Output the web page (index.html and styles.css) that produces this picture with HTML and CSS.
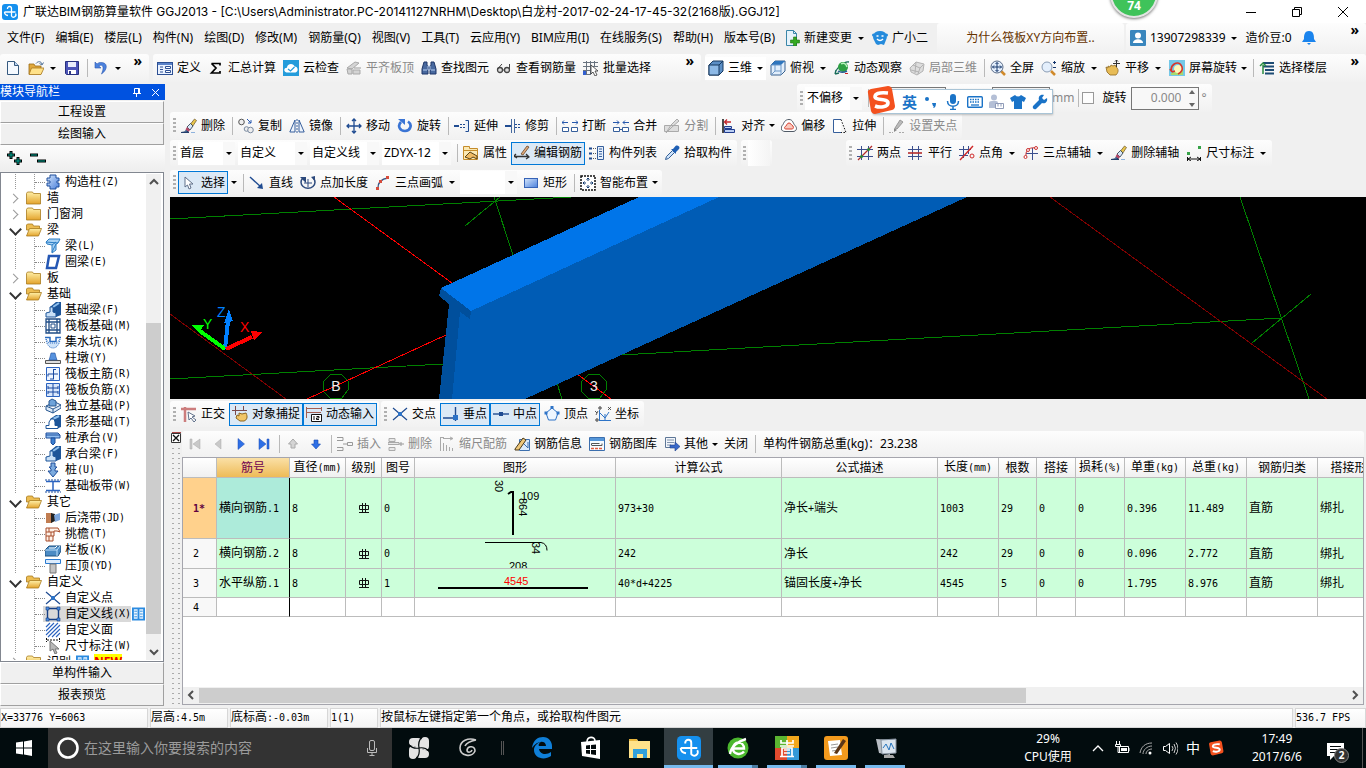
FILE: index.html
```html
<!DOCTYPE html>
<html lang="zh-CN">
<head>
<meta charset="utf-8">
<title>广联达BIM钢筋算量软件 GGJ2013</title>
<link rel="stylesheet" href="styles.css">
</head>
<body>
<svg class="defs" aria-hidden="true">
<defs>
<linearGradient id="gBlue" x1="0" y1="0" x2="1" y2="1"><stop offset="0" stop-color="#d5e6fb"/><stop offset="1" stop-color="#4a80dc"/></linearGradient>
<linearGradient id="gFold" x1="0" y1="0" x2="0" y2="1"><stop offset="0" stop-color="#fff0a8"/><stop offset="1" stop-color="#e3a32c"/></linearGradient>
<symbol id="logo" viewBox="0 0 16 16"><rect width="16" height="16" rx="3" fill="#1590ee"/><path d="M5.500 5V4.500a2 2 0 0 1 4 0V12a2 2 0 0 0 4-2.500M2.500 8h11M2.500 8q0 3 3.500 3.500" fill="none" stroke="#fff" stroke-width="1.300"/></symbol>
<symbol id="new" viewBox="0 0 16 16"><path d="M2.500 1.500h7l4 4v9h-11z" fill="#f4f9ff" stroke="#35597f"/><path d="M9.500 1.500v4h4" fill="#bcd5f3" stroke="#35597f"/></symbol>
<symbol id="open" viewBox="0 0 16 16"><path d="M1 4h5l1 2h6v8H1z" fill="#e0a83c" stroke="#9a6a14" stroke-width=".8"/><path d="M3.500 8H16l-3 6.500H1z" fill="#ffe28a" stroke="#a87920" stroke-width=".8"/><path d="M8 3.500C10 1 13 1 14 4M15.500 2.500L14 5l-2.500-1.500" fill="none" stroke="#4b6d94"/></symbol>
<symbol id="save" viewBox="0 0 16 16"><path d="M1.500 1.500h13v13h-12l-1-1z" fill="#4c54b8" stroke="#27307e"/><path d="M4 2h8v5H4z" fill="#e9edfb"/><path d="M4 10h8v4H4z" fill="#fff"/><path d="M5 11h2v3H5z" fill="#333b86"/></symbol>
<symbol id="undo" viewBox="0 0 16 16"><path d="M2 2v6h6L5.800 5.900C9 4 12 6 8.500 14c7-5 6-12-1-11.500-1.500 0-2.500.6-3.500 1.500z" fill="#4b82de" stroke="#2b57ae" stroke-width=".6"/></symbol>
<symbol id="define" viewBox="0 0 16 16"><rect x=".5" y="2.500" width="15" height="12" fill="#eaf2ff" stroke="#2c4f93"/><path d="M1 3h14v2H1z" fill="#5b83c9"/><path d="M3 7h3M3 9.500h3M3 12h3" stroke="#2c4f93"/><path d="M8.500 6.500h5v2h-5zM8.500 10.500h5v2h-5z" fill="#fff" stroke="#2c4f93"/></symbol>
<symbol id="sigma" viewBox="0 0 16 16"><path d="M3.500 3.500h8.500v2M12 11v2H3.500L8 8 3.500 3.500" fill="none" stroke="#000" stroke-width="1.700"/></symbol>
<symbol id="cloud" viewBox="0 0 16 16"><path d="M0 0h16v16H0z" fill="#249cdb"/><path d="M3.500 12.500C0 11.500 1 7.500 4 7.800 4 3 11 3 11.500 6.500c4 0 4 5.500 1 6z" fill="#fff"/><path d="M5 9l2.500 2L11.500 7" fill="none" stroke="#249cdb" stroke-width="1.300"/></symbol>
<symbol id="flat" viewBox="0 0 16 16"><path d="M1 8l8-6 4 1-7 6zM1 9h5v5H2zM7 10h7v4H7z" fill="#d4d4d4" stroke="#a9a9a9"/><path d="M8 8h7" stroke="#999"/></symbol>
<symbol id="bino" viewBox="0 0 16 16"><path d="M3 2h3v3l1 2v7H1V9zM10 2h3l2 7v5H9V7l1-2z" fill="#48699f" stroke="#1f3768"/><path d="M7 6h2v4H7zM2 10h4M10 10h4" fill="#1f3768" stroke="#b9d0f2"/></symbol>
<symbol id="glass" viewBox="0 0 16 16"><circle cx="4" cy="10" r="2.500" fill="#ddd" stroke="#444" stroke-width="1.300"/><circle cx="11" cy="10" r="2.500" fill="#ddd" stroke="#444" stroke-width="1.300"/><path d="M6.500 10h2M1.500 9L6 4M13.500 9V4" stroke="#444" fill="none"/></symbol>
<symbol id="batch" viewBox="0 0 16 16"><path d="M0 2.500h15M0 6.500h15M0 10.500h7M0 14.500h7M3.500 1v14M7.500 1v14M11.500 1v5" stroke="#69737f" fill="none"/><path d="M0 11h3v4H0z" fill="#315fd0"/><path d="M8 5l7 6h-3l2 4-2 1-2-4-2 2z" fill="#fff" stroke="#333" stroke-width=".8"/></symbol>
<symbol id="cube" viewBox="0 0 16 16"><path d="M1 5l4-4h10v10l-4 4H1z" fill="#5c8fc6" stroke="#17395f"/><path d="M1 5h10v10H1z" fill="#8db9e6" stroke="#17395f"/><path d="M11 5l4-4" stroke="#17395f"/></symbol>
<symbol id="cube2" viewBox="0 0 16 16"><path d="M1 5l4-4h10v10l-4 4H1z" fill="#e2eefb" stroke="#38618e"/><path d="M1 5l4-4h10l-4 4z" fill="#2e75bd"/><path d="M11 5v10M1 5h10M5 5v6h6M5 11l-4 4" stroke="#6c98c8" fill="none"/></symbol>
<symbol id="orbit" viewBox="0 0 16 16"><path d="M1 14C2 8 10 1 15 2M1 14l4-1M1 14l1-4" stroke="#176b58" fill="none" stroke-width="1.300"/><circle cx="9" cy="7" r="5" fill="#2ea043"/><path d="M7 4c3-2 5 0 6 3" stroke="#b9f2bf" fill="none" stroke-width="1.500"/><path d="M4 11c3 2 7 1 9 0" stroke="#245a92" stroke-width="1.500" fill="none"/><path d="M11 13.500h3" stroke="#c22"/></symbol>
<symbol id="part3" viewBox="0 0 16 16"><path d="M1 8l6-6 8 2-1 7-6 4-6-3z" fill="#ddd" stroke="#b2b2b2"/><path d="M4 5l7 3 3-3M7 2l-1 11M11 8l-2 6M2 10l8 2" fill="none" stroke="#b2b2b2"/></symbol>
<symbol id="full" viewBox="0 0 16 16"><path d="M11 11l4 4" stroke="#d08a2b" stroke-width="2.500"/><circle cx="7" cy="7" r="6" fill="#e4effc" stroke="#5a6c88"/><path d="M7 2.500v9M2.500 7h9M5.500 4L7 2.500 8.500 4M5.500 10L7 11.500 8.500 10M4 5.500L2.500 7 4 8.500M10 5.500L11.500 7 10 8.500" fill="none" stroke="#17386d"/></symbol>
<symbol id="zoomi" viewBox="0 0 16 16"><path d="M10 11l4 4" stroke="#d08a2b" stroke-width="2.500"/><circle cx="6" cy="7" r="5" fill="#e4effc" stroke="#8a9cb4"/><path d="M13.500 1v3M12 2.500h3M12 7.500h3" stroke="#17386d"/></symbol>
<symbol id="hand" viewBox="0 0 16 16"><path d="M1 7l2 1V6l2 1 1-2 2 1 2-1 2 3c2 2 1 5-1 7H5L2 12z" fill="#e8bc56" stroke="#8d6720" stroke-width=".8"/><path d="M11.500 0v7M8 3.500h7M10 1.500L11.500 0 13 1.500" stroke="#333" fill="none"/></symbol>
<symbol id="rotv" viewBox="0 0 16 16"><path d="M0 0h16v16H0z" fill="#74c8e8"/><path d="M2 13l12-4v6H2z" fill="#a8da6e"/><circle cx="9" cy="9" r="4" fill="#fff7b8"/><path d="M3 12C0 5 9 0 12 5c3 4 0 8-3 9M3 12l-2-3M3 12l3-1" fill="none" stroke="#d8362b" stroke-width="1.600"/></symbol>
<symbol id="floors" viewBox="0 0 16 16"><path d="M4 3h11M4 6.500h11M6 10h9M6 13.500h9" stroke="#1c4b74" stroke-width="1.800"/><path d="M4 14V5M1 6l3-3 3 3" stroke="#2a8c42" stroke-width="1.500" fill="none"/></symbol>
<symbol id="newchg" viewBox="0 0 16 16"><path d="M2.500.500h7l3 3v12h-10z" fill="#e6f3fb" stroke="#3a86a9"/><path d="M9.500.500v3h3" fill="none" stroke="#3a86a9"/><path d="M9.500 7h3v3h3v3h-3v3h-3v-3h-3v-3h3z" fill="#35a921" stroke="#1c7410" stroke-width=".6"/></symbol>
<symbol id="robot" viewBox="0 0 16 16"><path d="M8 1c7 0 8 6 6 9l-2 5-3-1-3 1-2-1-2-4C0 7 1 1 8 1z" fill="#258bdc"/><circle cx="1.500" cy="5" r="1.500" fill="#258bdc"/><circle cx="14.500" cy="5" r="1.500" fill="#258bdc"/><path d="M4.500 6h2M9.500 6h2M5 9c2 2 4 2 6 0" stroke="#fff" stroke-width="1.500" fill="none"/></symbol>
<symbol id="user" viewBox="0 0 16 16"><rect width="16" height="16" rx="1" fill="#3986bd"/><circle cx="8" cy="5.500" r="3" fill="#fff"/><path d="M3 13c0-5 10-5 10 0z" fill="#fff"/></symbol>
<symbol id="bell" viewBox="0 0 16 16"><path d="M8 1c5 0 5 5 5 8l2 3H1l2-3c0-3 0-8 5-8z" fill="#1b84ed"/><path d="M6 13h4l-2 2z" fill="#1b84ed"/></symbol>
<symbol id="brush" viewBox="0 0 16 16"><path d="M9.500 6l4-5 2 1.500-4 6z" fill="#e8c54c" stroke="#69552a" stroke-width=".7"/><path d="M6 9l3.500-3.500L12 8l-3 4z" fill="#d9e7f8" stroke="#234" stroke-width=".8"/><path d="M6 9l3 3-1.500 2-3-2.500z" fill="#b34666"/><path d="M0 14.500q4 0 5-2l3 2z" fill="#3e6496" stroke="#24406c"/><path d="M10 14.500h4" stroke="#8eb2dd"/></symbol>
<symbol id="copy" viewBox="0 0 16 16"><circle cx="3.500" cy="4" r="2.800" fill="#eee" stroke="#555"/><circle cx="8.500" cy="11" r="2.300" fill="#eee" stroke="#7a8aa0"/><circle cx="12.500" cy="12" r="2.800" fill="#eee" stroke="#7a8aa0"/><path d="M9 1l4 4M13 2v3h-3" stroke="#2858ae" fill="none"/></symbol>
<symbol id="mirror" viewBox="0 0 16 16"><path d="M6 2v12H.800zM10 2v12h5.200z" fill="#eef4fc" stroke="#365f9c"/><path d="M8 1v14" stroke="#365f9c" stroke-dasharray="2 1"/></symbol>
<symbol id="move" viewBox="0 0 16 16"><path d="M8 1v14M1 8h14M6 3l2-2 2 2M6 13l2 2 2-2M3 6L1 8l2 2M13 6l2 2-2 2" fill="none" stroke="#1f4b91" stroke-width="1.300"/></symbol>
<symbol id="rotate" viewBox="0 0 16 16"><path d="M4 4c-4 4-1 9 4 9s8-6 3-9.500" fill="none" stroke="#3a74d4" stroke-width="2.700"/><path d="M1 1h7v6z" fill="#3a74d4"/></symbol>
<symbol id="extend" viewBox="0 0 16 16"><path d="M0 8h5" stroke="#1f4b91" stroke-width="2"/><path d="M6 6.500h5M6 9.500h5" stroke="#1f4b91" stroke-dasharray="2 1"/><path d="M11.500 2.500h3v11h-3" fill="#e7effa" stroke="#1f4b91"/></symbol>
<symbol id="trim" viewBox="0 0 16 16"><path d="M0 8h6" stroke="#1f4b91" stroke-width="2"/><path d="M10 6.500h5M10 9.500h5" stroke="#1f4b91" stroke-dasharray="2 1"/><path d="M6.500 1v14M9.500 1v14" fill="none" stroke="#45699f"/></symbol>
<symbol id="break" viewBox="0 0 16 16"><path d="M.500 9.500h6v4h-6zM9.500 9.500h6v4h-6z" fill="#fff" stroke="#365f9c"/><path d="M0 4.500h6M2 2.500l-2 2 2 2M10 4.500h6M14 2.500l2 2-2 2" stroke="#2658ad" fill="none"/></symbol>
<symbol id="merge" viewBox="0 0 16 16"><path d="M.500 9.500h6v4h-6zM9.500 9.500h6v4h-6zM6 11.500h4" fill="#fff" stroke="#365f9c"/><path d="M0 4.500h6M4 2.500l2 2-2 2M10 4.500h6M12 2.500l-2 2 2 2" stroke="#2658ad" fill="none"/></symbol>
<symbol id="split" viewBox="0 0 16 16"><path d="M.500 7.500h14v6H.500zM2 15l5-8 6-6 2 2-7 6z" fill="#ddd" stroke="#aaa"/></symbol>
<symbol id="align" viewBox="0 0 16 16"><path d="M2 1v14" stroke="#111" stroke-width="1.500"/><path d="M4 4h6M6 1.500L3.500 4 6 6.500" stroke="#c3272d" fill="none" stroke-width="1.300"/><path d="M3.500 8.500h7v2h-7zM3.500 11.500h10v3h-10z" fill="#b9cdf2" stroke="#203c8f"/></symbol>
<symbol id="offset" viewBox="0 0 16 16"><path d="M8 1.500c4 0 4 4 6 6 3 3 1 6-2 6H4c-4 0-5-4-2-7 1-2 2-5 6-5z" fill="#fff" stroke="#4f5965"/><path d="M8 5c2 0 2 2 4 3 1 2 0 3-1 3H5c-2 0-2-2 0-3 1-1 1-3 3-3z" fill="#fac8bd" stroke="#d33e2e"/></symbol>
<symbol id="stretch" viewBox="0 0 16 16"><path d="M9 1.500H1.500v13H9" fill="#fff" stroke="#365f9c"/><path d="M9 1.500l5 13H9" fill="none" stroke="#111" stroke-dasharray="1.500 1.500"/></symbol>
<symbol id="gripi" viewBox="0 0 16 16"><path d="M6 10l5-8 3 2-6 7z" fill="#bbb" stroke="#999"/><path d="M5 10l3 2-3 2z" fill="#888"/><path d="M0 14.500h4M10 14.500h6" stroke="#aaa" stroke-dasharray="2 1"/></symbol>
<symbol id="prop" viewBox="0 0 16 16"><path d="M.500 1.500h6v2h8v11H.500z" fill="#fbe9b4" stroke="#c58c2a"/><path d="M1 5.500h13" stroke="#c58c2a"/><path d="M2 12l5-5 7 4v3l-4-2-3 2z" fill="#f0bb64" stroke="#594216"/></symbol>
<symbol id="editr" viewBox="0 0 16 16"><path d="M7 9l6-8 2 1-6 8z" fill="#e2ab7b" stroke="#674426" stroke-width=".8"/><path d="M0 11.500h14M2 9l-2 2 3 2M12 9l3 3-3 2" fill="none" stroke="#333" stroke-width="1.300"/></symbol>
<symbol id="list" viewBox="0 0 16 16"><path d="M0 3.500h3M0 8.500h3M0 13.500h3" stroke="#1f4b91" stroke-width="2"/><path d="M4 3.500h3M4 8.500h3M4 13.500h3" stroke="#555" stroke-dasharray="1 1"/><path d="M8.500 1.500h6v13h-6z" fill="#e6effb" stroke="#365f9c"/><path d="M10 4h3M10 6.500h3M10 9h3M10 11.500h3" stroke="#365f9c"/></symbol>
<symbol id="pick" viewBox="0 0 16 16"><path d="M1.500 14.500l1-3 6-6 2 2-6 6z" fill="#cde2fa" stroke="#345f96"/><path d="M7 4l2 0 2.500-3C14-.500 16.500 2 15 4l-3 3v2z" fill="#1f5fb4"/></symbol>
<symbol id="ax2" viewBox="0 0 16 16"><path d="M4.500 1v14M11.500 1v14M0 4.500h16M0 11.500h16" stroke="#3b4f8e"/><path d="M1 15L15 1" stroke="#b42b2b" stroke-width="1.300"/><circle cx="4.500" cy="11.500" r="1.500" fill="#278b36"/><circle cx="11.500" cy="4.500" r="1.500" fill="#278b36"/></symbol>
<symbol id="axp" viewBox="0 0 16 16"><path d="M4.500 1v14M10.500 1v14M0 4.500h14M0 11.500h14" stroke="#3b4f8e"/><path d="M0 8h14" stroke="#b42b2b" stroke-width="1.600"/></symbol>
<symbol id="axa" viewBox="0 0 16 16"><path d="M4.500 1v12M0 4.500h12M0 10.500h9M9.500 1v8" stroke="#3b4f8e"/><path d="M1 15L14 1" stroke="#d02929" stroke-width="1.400"/><circle cx="13" cy="11" r="2" fill="none" stroke="#d02929"/></symbol>
<symbol id="ax3" viewBox="0 0 16 16"><path d="M9.500 3v12M3 8.500h12" stroke="#3b4f8e"/><path d="M3 11C2 4 8 2 13 3" fill="none" stroke="#c33"/><circle cx="2.500" cy="12" r="1.500" fill="#fff" stroke="#c33"/><circle cx="13" cy="3" r="1.500" fill="#fff" stroke="#c33"/><circle cx="5" cy="5" r="1.500" fill="#fff" stroke="#c33"/></symbol>
<symbol id="dim" viewBox="0 0 16 16"><path d="M1 7h3v3H1zM12 1h3v3h-3z" fill="#37a348"/><path d="M1.500 12v4M14.500 12v4M2 14h12M5 12l-3 2 3 2M11 12l3 2-3 2" fill="none" stroke="#111"/></symbol>
<symbol id="cursor" viewBox="0 0 16 16"><path d="M4 2v10l2.500-2L8 14l2-1-1.500-4H12z" fill="#fff" stroke="#60708a"/></symbol>
<symbol id="line" viewBox="0 0 16 16"><path d="M1 2l11 10" stroke="#1f4b91" stroke-width="1.400"/><path d="M14 14l-6-1 5-5z" fill="#1f4b91"/></symbol>
<symbol id="ptlen" viewBox="0 0 16 16"><path d="M3 3a7 6 0 1 0 10 0" fill="none" stroke="#2c497c" stroke-width="1.500"/><path d="M0 2h6v6zM15 1l-4 1 4 4z" fill="#2c497c"/><path d="M8 4v8M4 8h8" stroke="#2c497c"/></symbol>
<symbol id="arc" viewBox="0 0 16 16"><path d="M3 13C3 7 6 4 13 3" fill="none" stroke="#38507f" stroke-width="1.300"/><path d="M1 12h3v3H1zM11 1h3v3h-3zM4 5h3v3H4z" fill="#d74b3b"/></symbol>
<symbol id="recti" viewBox="0 0 16 16"><rect x="1.500" y="3.500" width="13" height="9" fill="url(#gBlue)" stroke="#3663b7"/></symbol>
<symbol id="smart" viewBox="0 0 16 16"><rect x="1" y="1" width="14" height="14" fill="#fff" stroke="#111" stroke-width="1.500" stroke-dasharray="2 1"/><path d="M8 3v3M8 10v3M3 8h3M10 8h3M6.500 4.500L8 3l1.500 1.500M6.500 11.500L8 13l1.500-1.500M4.500 6.500L3 8l1.500 1.500M11.500 6.500L13 8l-1.500 1.500" fill="none" stroke="#123a70"/></symbol>
<symbol id="ortho" viewBox="0 0 16 16"><path d="M0 3h15M4 1v15" stroke="#cc7d7d" stroke-width="2.500"/><path d="M7 6l1 8 2-2 3 4 2-2-4-3 3-1z" fill="#fff" stroke="#60708a"/></symbol>
<symbol id="snap" viewBox="0 0 16 16"><path d="M3.500 0v9M0 4.500h15M11.500 0v5" stroke="#7b4b4b"/><path d="M5 9l2 1V7l3 1 4-1c2 4 1 7-2 8H8l-4-3z" fill="#f1c667" stroke="#8d6720"/></symbol>
<symbol id="dyn" viewBox="0 0 16 16"><path d="M.500 1v11M15.500 1v4M1 2.500h14M1 6.500h14" stroke="#a45d50"/><path d="M5.500 8.500h10v7h-10z" fill="#fff" stroke="#111"/><path d="M8 10v4M10.500 10.500h2.500v1.500h-2.500v1.500H13" fill="none" stroke="#111"/></symbol>
<symbol id="cross" viewBox="0 0 16 16"><path d="M1 2l14 12M15 2L1 14" stroke="#1f4b91" stroke-width="1.200"/><path d="M6 6h4v4H6z" fill="#2d73c7"/></symbol>
<symbol id="perp" viewBox="0 0 16 16"><path d="M0 12h15M12.500 1v14" stroke="#1f4b91" stroke-width="1.400"/><path d="M10 9h5v5h-5z" fill="#2d73c7"/></symbol>
<symbol id="mid" viewBox="0 0 16 16"><path d="M0 8h16" stroke="#1f4b91" stroke-width="1.400"/><path d="M6 6h4v4H6z" fill="#1f4b91"/></symbol>
<symbol id="vert" viewBox="0 0 16 16"><path d="M8 2l6 5-2.500 7h-7L2 7z" fill="#eef6ff" stroke="#2d73c7"/><path d="M6.500 0h3v3h-3zM12.500 5.500h3v3h-3zM.500 5.500h3v3h-3z" fill="#2d73c7"/></symbol>
<symbol id="coord" viewBox="0 0 16 16"><path d="M4.500 4v11M4 14.500h12M5 7l5 5 4-6M10 8v6" fill="none" stroke="#2d73c7"/><circle cx="5" cy="2" r="1.200" fill="none" stroke="#333"/><circle cx="2" cy="14" r="1.200" fill="none" stroke="#333"/><path d="M13 1l3 3M16 1l-3 3M0 5l2 2M3 5l-2 4" stroke="#333" stroke-width=".8"/></symbol>
<symbol id="first" viewBox="0 0 16 16"><path d="M3 3h2v10H3zM13 3v10L6 8z" fill="#c9c9c9" stroke="#aaa" stroke-width=".5"/></symbol>
<symbol id="prev" viewBox="0 0 16 16"><path d="M11 3v10L5 8z" fill="#c9c9c9" stroke="#aaa" stroke-width=".5"/></symbol>
<symbol id="next" viewBox="0 0 16 16"><path d="M5 2.500v11L11.500 8z" fill="#2f70e6" stroke="#1a4bb0" stroke-width=".5"/></symbol>
<symbol id="last" viewBox="0 0 16 16"><path d="M11 3h2v10h-2zM3 2.500v11L10 8z" fill="#2f70e6" stroke="#1a4bb0" stroke-width=".5"/></symbol>
<symbol id="up" viewBox="0 0 16 16"><path d="M8 3l4.500 5H10v4H6V8H3.500z" fill="#d4d4d4" stroke="#aaa"/></symbol>
<symbol id="down" viewBox="0 0 16 16"><path d="M8 13l4.500-5H10V4H6v4H3.500z" fill="#2f70e6" stroke="#1a4bb0" stroke-width=".6"/></symbol>
<symbol id="ins" viewBox="0 0 16 16"><path d="M0 1.500h6v3H0M0 11.500h6v3H0M10.500 6.500h5v3h-5zM6 8h4" fill="none" stroke="#999"/></symbol>
<symbol id="del" viewBox="0 0 16 16"><path d="M1 2.500h6v3H1zM1 11.500h6v3H1zM0 8.500h11v-2H0z" fill="#e8e8e8" stroke="#aaa"/><path d="M11 8h5M13 6v4" stroke="#999"/></symbol>
<symbol id="scale" viewBox="0 0 16 16"><path d="M1.500 1v14M2 1.500h3M4 2.500h9M11 1l3 1.500L11 4M4.500 7v8M7.500 9v6M10.500 11v4M13.500 12v3" fill="none" stroke="#aaa"/></symbol>
<symbol id="info" viewBox="0 0 16 16"><path d="M5.500 3.500h10v11h-10z" fill="#dcebfc" stroke="#3c6fae"/><path d="M8 6l6 6M14 6v6" stroke="#3c6fae"/><path d="M1 13l8-11 3 2-7 10H1z" fill="#efc779" stroke="#49391a"/></symbol>
<symbol id="lib" viewBox="0 0 16 16"><path d="M.500 1.500h15v13H.500z" fill="#f7fbff" stroke="#3c6fae"/><path d="M1 2h14v3H1z" fill="#5596d9"/><path d="M2.500 9.500V7.500h8M3 9.500h10v-2" stroke="#555" fill="none"/><path d="M2 12.500h12" stroke="#e45b3c" stroke-width="1.500" stroke-dasharray="3 1"/></symbol>
<symbol id="other" viewBox="0 0 16 16"><path d="M1.500 1.500h10v10h-10z" fill="#f3f6fb" stroke="#5e7797"/><path d="M3 4h7M3 6.500h7M3 9h4" stroke="#7f92ab"/><path d="M6 9h5V6l5 4.500-5 4.500v-3H6z" fill="#3868c9" stroke="#1e3f8c" stroke-width=".6"/></symbol>
<symbol id="fold" viewBox="0 0 16 16"><path d="M.500 3.500l1-1.500h5l1 1.500h7v10.500H.500z" fill="url(#gFold)" stroke="#a87b1e" stroke-width=".8"/></symbol>
<symbol id="foldo" viewBox="0 0 16 16"><path d="M.500 3l1-1h5l1 2h6v4h-13z" fill="#edbd52" stroke="#a87b1e" stroke-width=".8"/><path d="M3.500 6.500h12L12.500 14H.500z" fill="url(#gFold)" stroke="#a87b1e" stroke-width=".8"/></symbol>
<symbol id="t-col" viewBox="0 0 16 16"><path d="M5 1h6v3h3v3h-2v2h2v4h-3v2H5v-3H2V9h3V7H2V4h3z" fill="url(#gBlue)" stroke="#1e4f9c"/></symbol>
<symbol id="t-beam" viewBox="0 0 16 16"><path d="M1 4l3-3h11l-2 4-2 1v6l-4 3V7L2 6z" fill="#a8d2f5" stroke="#2a7dc4"/><path d="M1 4l12 1M7 7l4-3M7 14l4-8" stroke="#2a7dc4"/></symbol>
<symbol id="t-ring" viewBox="0 0 16 16"><path d="M4 2h10l-3 12H2z" fill="#fff" stroke="#2457b4" stroke-width="2.500"/></symbol>
<symbol id="t-fb" viewBox="0 0 16 16"><path d="M5 5l6-5h5v13l-5 2z" fill="#1d5599"/><path d="M8 5l6-4" stroke="#8fc0ee" stroke-width="2"/><path d="M1 15v-4l4-1V5h3v5l3 1v4z" fill="#c9e0f7" stroke="#1d5599"/></symbol>
<symbol id="t-strip2" viewBox="0 0 16 16"><path d="M5 5l6-4h5v12l-5 2z" fill="#1d5599"/><path d="M8 5l6-3" stroke="#8fc0ee" stroke-width="2"/><path d="M1 14.500v-3h3V8l2-3h3l1 3v3.500h3v3z" fill="#fff" stroke="#1d5599"/></symbol>
<symbol id="t-raft" viewBox="0 0 16 16"><path d="M1 1h14v14H1zM4 1v14M12 1v14M1 4h14M1 12h14" fill="#fff" stroke="#214d86" stroke-width="1.300"/><path d="M6 6h4v4H6z" fill="#fff" stroke="#214d86"/></symbol>
<symbol id="t-pit" viewBox="0 0 16 16"><path d="M1 5c1 12 13 12 14 0l-3 4H4z" fill="#cfe3f9" stroke="#2a6bc0" stroke-dasharray="1 1"/><path d="M0 3.500h5v4h6v-4h5" fill="none" stroke="#2a6bc0" stroke-width="1.500"/></symbol>
<symbol id="t-pier" viewBox="0 0 16 16"><path d="M.500 10.500h15v3H.500z" fill="#ddd" stroke="#555"/><path d="M6 3h4l1 4 1 3H4l1-3z" fill="#5792de" stroke="#1e4f9c" stroke-width=".6"/></symbol>
<symbol id="t-main" viewBox="0 0 16 16"><path d="M1.500 1.500h13v13h-13z" fill="#eef5ff" stroke="#2b63c0"/><path d="M8.500 3v10M3 10.500V8h10M8 3.500h3M5 13h4" fill="none" stroke="#1849a0"/></symbol>
<symbol id="t-neg" viewBox="0 0 16 16"><path d="M1.500 1.500h13v13h-13z" fill="#d9e7fb" stroke="#2b63c0"/><path d="M8 2v12M3 6h10M3 10h10M3 4v3M13 4v3M3 9v3M13 9v3" fill="none" stroke="#1849a0"/></symbol>
<symbol id="t-ind" viewBox="0 0 16 16"><path d="M1 8l9-4 6 3v3l-8 5-7-3zM1 8l7 3 8-4M8 11v4" fill="#dbe9f8" stroke="#27568f"/><path d="M4 3l3-2 4 2v5H4z" fill="#6ea3da" stroke="#27568f"/></symbol>
<symbol id="t-cap" viewBox="0 0 16 16"><path d="M1 3h12l2 2v3H1z" fill="#8fbdf0" stroke="#1e4f9c"/><path d="M6 8h4v5l-2 2-2-2z" fill="#3a7ed0" stroke="#1e4f9c"/><path d="M1 5h14" stroke="#1e4f9c"/></symbol>
<symbol id="t-pile" viewBox="0 0 16 16"><path d="M6 1h4v4h2l-2 2v2h3l-5 6-5-6h3V7L4 5h2z" fill="#7cabdf" stroke="#1e4f9c"/></symbol>
<symbol id="t-strip" viewBox="0 0 16 16"><path d="M0 2h16M0 14h16" stroke="#1e4f9c" stroke-dasharray="2 1"/><path d="M1 3.500h14M1 12.500h14M8 4v9" stroke="#2b63c0" stroke-width="1.500"/></symbol>
<symbol id="t-pour" viewBox="0 0 16 16"><path d="M1 3h6v10H1z" fill="#c17d51"/><path d="M6 3l4 1v7l-4 2z" fill="#222"/><path d="M9 5l6-2v7l-5 2z" fill="#7da6dc"/></symbol>
<symbol id="t-eave" viewBox="0 0 16 16"><path d="M1 2h12l2 4-3-1h-3v5H8v5H1z" fill="#fff2e8" stroke="#a84c2a"/><path d="M1 6h8M1 10h7M4 2v4M6 6v4M4 10v5" stroke="#a84c2a"/></symbol>
<symbol id="t-rail" viewBox="0 0 16 16"><path d="M0 8l4-4h12v5l-3 5H0z" fill="#4b8bc4" stroke="#1d5180"/><path d="M0 8h12v6M12 8l3-4" fill="none" stroke="#bfe0fa"/><path d="M4 6h6l2-2" stroke="#fff" fill="none"/></symbol>
<symbol id="t-top" viewBox="0 0 16 16"><path d="M.500 1.500h15v4H.500z" fill="#dcecfd" stroke="#2b7bd0"/><path d="M5 6h6v9H5z" fill="#c4c4c4" stroke="#777"/></symbol>
<symbol id="t-line" viewBox="0 0 16 16"><path d="M2.500 2.500h11v11h-11z" fill="none" stroke="#163f85" stroke-width="1.400"/><path d="M1 1h3v3H1zM12 1h3v3h-3zM1 12h3v3H1zM12 12h3v3h-3z" fill="#4b8bdf" stroke="#163f85" stroke-width=".6"/></symbol>
<symbol id="t-face" viewBox="0 0 16 16"><path d="M1 5l4-4M1 9l8-8M1 13l12-12M3 15L15 3M7 15l8-8M11 15l4-4" stroke="#2b63c0" stroke-width="1.100"/></symbol>
<symbol id="t-dim" viewBox="0 0 16 16"><path d="M1.500 0v4M14.500 0v4M2 2h12" stroke="#111" stroke-dasharray="2 1"/><path d="M5 3v10l3-2 2 5 2-1-2-4h4z" fill="#b8b8b8" stroke="#777"/></symbol>
<symbol id="book" viewBox="0 0 14 16"><path d="M0 1h14v14H0z" fill="#2b8be0"/><path d="M2 3h4v10H2zM8 3h4v10H8z" fill="#eaf5ff"/><path d="M2.500 5h3M2.500 8h3M2.500 11h3M8.500 5h3M8.500 8h3M8.500 11h3" stroke="#2b8be0"/></symbol>
<symbol id="rebar" viewBox="0 0 12 12"><path d="M1.500 3.500h9v4h-9zM4.500 1v9M7.500 1v9M1 10.500h10" fill="none" stroke="#111"/></symbol>
<symbol id="s" viewBox="0 0 30 30"><path d="M2 8Q1 5 5 4L22 1q3 0 4 3l3 17q0 3-3 4L9 29q-3 0-4-3z" fill="#f4511e"/><path d="M22 8C12 7 9 9 9 12c1 4 13 1 13 6 0 4-8 5-13 3" fill="none" stroke="#fff" stroke-width="3.600"/></symbol>
</defs>
</svg>

<div class="window">
<header class="titlebar">
  <svg class="i"><use href="#logo"/></svg>
  <h1>广联达BIM钢筋算量软件 GGJ2013 - [C:\Users\Administrator.PC-20141127NRHM\Desktop\白龙村-2017-02-24-17-45-32(2168版).GGJ12]</h1>
  <div class="winbtns">
    <button aria-label="最小化"><svg class="i"><path d="M3 8.500h10" stroke="#000"/></svg></button>
    <button aria-label="还原"><svg class="i"><path d="M3.500 5.500h7v7h-7zM5.500 5.500v-2h7v7h-2" fill="none" stroke="#000"/></svg></button>
    <button aria-label="关闭"><svg class="i"><path d="M3 3l10 10M13 3L3 13" stroke="#000"/></svg></button>
  </div>
  <div class="ball">74</div>
</header>

<nav class="menubar">
  <div class="menus">
    <button>文件(F)</button><button>编辑(E)</button><button>楼层(L)</button><button>构件(N)</button><button>绘图(D)</button><button>修改(M)</button><button>钢筋量(Q)</button><button>视图(V)</button><button>工具(T)</button><button>云应用(Y)</button><button>BIM应用(I)</button><button>在线服务(S)</button><button>帮助(H)</button><button>版本号(B)</button>
    <button class="b"><svg class="i"><use href="#newchg"/></svg>新建变更<i class="caret"></i></button>
    <button class="b"><svg class="i"><use href="#robot"/></svg>广小二</button>
  </div>
  <a class="bar tip" href="#">为什么筏板XY方向布置..</a>
  <div class="bar account">
    <button class="b"><svg class="i"><use href="#user"/></svg>13907298339<i class="caret"></i></button>
    <button class="b">造价豆:0</button>
    <button class="b" aria-label="通知"><svg class="i"><use href="#bell"/></svg></button>
    <span class="more">»</span>
  </div>
</nav>

<div class="row first">
  <div class="bar file">
    <button class="b" aria-label="新建"><svg class="i"><use href="#new"/></svg></button>
    <button class="b" aria-label="打开"><svg class="i"><use href="#open"/></svg><i class="caret"></i></button>
    <button class="b" aria-label="保存"><svg class="i"><use href="#save"/></svg></button>
    <i class="sep"></i>
    <button class="b" aria-label="撤销"><svg class="i"><use href="#undo"/></svg><i class="caret"></i></button>
    <span class="more">»</span>
  </div>
  <div class="bar calc">
    <button class="b"><svg class="i"><use href="#define"/></svg>定义</button>
    <button class="b"><svg class="i"><use href="#sigma"/></svg>汇总计算</button>
    <button class="b"><svg class="i"><use href="#cloud"/></svg>云检查</button>
    <button class="b off"><svg class="i"><use href="#flat"/></svg>平齐板顶</button>
    <button class="b"><svg class="i"><use href="#bino"/></svg>查找图元</button>
    <button class="b"><svg class="i"><use href="#glass"/></svg>查看钢筋量</button>
    <button class="b"><svg class="i"><use href="#batch"/></svg>批量选择</button>
    <span class="more">»</span>
  </div>
  <div class="bar view">
    <button class="b field"><svg class="i"><use href="#cube"/></svg>三维<i class="caret"></i></button>
    <button class="b"><svg class="i"><use href="#cube2"/></svg>俯视<i class="caret"></i></button>
    <button class="b"><svg class="i"><use href="#orbit"/></svg>动态观察</button>
    <button class="b off"><svg class="i"><use href="#part3"/></svg>局部三维</button>
    <i class="sep"></i>
    <button class="b"><svg class="i"><use href="#full"/></svg>全屏</button>
    <button class="b"><svg class="i"><use href="#zoomi"/></svg>缩放<i class="caret"></i></button>
    <button class="b"><svg class="i"><use href="#hand"/></svg>平移<i class="caret"></i></button>
    <button class="b"><svg class="i"><use href="#rotv"/></svg>屏幕旋转<i class="caret tight"></i></button>
    <i class="sep"></i>
    <button class="b"><svg class="i"><use href="#floors"/></svg>选择楼层</button>
    <span class="more">»</span>
  </div>
</div>

<div class="work">
<aside class="side">
  <div class="side-head"><span>模块导航栏</span>
    <button aria-label="固定"><svg class="i"><path d="M5.500 9V4.500h5V9M9.500 4v5M4 9.500h8M7.500 10v3" fill="none" stroke="#fff"/></svg></button>
    <button aria-label="关闭"><svg class="i"><path d="M5 5l7 7M12 5l-7 7" stroke="#fff"/></svg></button>
  </div>
  <button class="tab">工程设置</button>
  <button class="tab">绘图输入</button>
  <div class="side-tools">
    <button aria-label="展开"><svg class="i"><path d="M0 5h8M4 1v8M7 11h8M11 7v8" stroke="#000" stroke-width="3"/><path d="M1 5h6M4 2v6M8 11h6M11 8v6" stroke="#00a896"/></svg></button>
    <button aria-label="折叠"><svg class="i"><path d="M0 5h8M7 11h9" stroke="#000" stroke-width="3"/><path d="M1 5h6M8 11h7" stroke="#00a896"/></svg></button>
  </div>
  <div class="tree">
    <ul class="nodes">
      <li><ul>
        <li><svg class="i"><use href="#t-col"/></svg>构造柱<b>(Z)</b></li>
      </ul></li>
      <li><div class="g shut"><svg class="i"><use href="#fold"/></svg>墙</div></li>
      <li><div class="g shut"><svg class="i"><use href="#fold"/></svg>门窗洞</div></li>
      <li><div class="g"><svg class="i"><use href="#foldo"/></svg>梁</div><ul>
        <li><svg class="i"><use href="#t-beam"/></svg>梁<b>(L)</b></li>
        <li><svg class="i"><use href="#t-ring"/></svg>圈梁<b>(E)</b></li>
      </ul></li>
      <li><div class="g shut"><svg class="i"><use href="#fold"/></svg>板</div></li>
      <li><div class="g"><svg class="i"><use href="#foldo"/></svg>基础</div><ul>
        <li><svg class="i"><use href="#t-fb"/></svg>基础梁<b>(F)</b></li>
        <li><svg class="i"><use href="#t-raft"/></svg>筏板基础<b>(M)</b></li>
        <li><svg class="i"><use href="#t-pit"/></svg>集水坑<b>(K)</b></li>
        <li><svg class="i"><use href="#t-pier"/></svg>柱墩<b>(Y)</b></li>
        <li><svg class="i"><use href="#t-main"/></svg>筏板主筋<b>(R)</b></li>
        <li><svg class="i"><use href="#t-neg"/></svg>筏板负筋<b>(X)</b></li>
        <li><svg class="i"><use href="#t-ind"/></svg>独立基础<b>(P)</b></li>
        <li><svg class="i"><use href="#t-strip2"/></svg>条形基础<b>(T)</b></li>
        <li><svg class="i"><use href="#t-cap"/></svg>桩承台<b>(V)</b></li>
        <li><svg class="i"><use href="#t-fb"/></svg>承台梁<b>(F)</b></li>
        <li><svg class="i"><use href="#t-pile"/></svg>桩<b>(U)</b></li>
        <li><svg class="i"><use href="#t-strip"/></svg>基础板带<b>(W)</b></li>
      </ul></li>
      <li><div class="g"><svg class="i"><use href="#foldo"/></svg>其它</div><ul>
        <li><svg class="i"><use href="#t-pour"/></svg>后浇带<b>(JD)</b></li>
        <li><svg class="i"><use href="#t-eave"/></svg>挑檐<b>(T)</b></li>
        <li><svg class="i"><use href="#t-rail"/></svg>栏板<b>(K)</b></li>
        <li><svg class="i"><use href="#t-top"/></svg>压顶<b>(YD)</b></li>
      </ul></li>
      <li><div class="g"><svg class="i"><use href="#foldo"/></svg>自定义</div><ul>
        <li><svg class="i"><use href="#cross"/></svg>自定义点</li>
        <li class="sel"><svg class="i"><use href="#t-line"/></svg>自定义线<b>(X)</b><svg class="i book"><use href="#book"/></svg></li>
        <li><svg class="i"><use href="#t-face"/></svg>自定义面</li>
        <li><svg class="i"><use href="#t-dim"/></svg>尺寸标注<b>(W)</b></li>
      </ul></li>
      <li><div class="g shut"><svg class="i"><use href="#fold"/></svg>识别 <svg class="i book"><use href="#book"/></svg><em>NEW</em></div></li>
    </ul>
    <div class="vscroll"><svg class="i"><path d="M4 10l4-4 4 4" fill="none" stroke="#505050" stroke-width="2"/></svg><div class="track"><div class="thumb"></div></div><svg class="i"><path d="M4 6l4 4 4-4" fill="none" stroke="#505050" stroke-width="2"/></svg></div>
  </div>
  <button class="tab">单构件输入</button>
  <button class="tab">报表预览</button>
</aside>

<main class="main">
  <div class="row r2">
    <div class="bar off-bar">
      <i class="grip"></i>
      <label class="combo w57"><select aria-label="偏移方式"><option>不偏移</option></select></label>
      <i class="sep"></i>
      <span class="coord"><input aria-label="X" disabled><input aria-label="Y" disabled></span>
      <span class="mm">mm</span>
      <i class="sep"></i>
      <label class="chk"><input type="checkbox">旋转</label>
      <span class="spin"><input aria-label="旋转角度" value="0.000"><svg class="ud"><path d="M1 6l3-4 3 4zM1 15l3 4 3-4z" fill="#666"/></svg></span><span class="deg">°</span>
    </div>
    <div class="ime">
      <svg class="slogo"><use href="#s"/></svg>
      <strong>英</strong>
      <svg class="i"><circle cx="4" cy="5" r="2" fill="#1a73c7"/><path d="M9 9h4c0 3-1 5-3 5 1-1 1-2 0-2z" fill="#1a73c7"/></svg>
      <svg class="i"><rect x="5" y="0" width="6" height="10" rx="3" fill="#1a73c7"/><path d="M2.500 7c0 7 11 7 11 0M8 12v3M5 15.500h6" fill="none" stroke="#1a73c7" stroke-width="1.500"/></svg>
      <svg class="i"><rect x=".7" y="2.700" width="14.600" height="10.600" rx="1" fill="none" stroke="#1a73c7" stroke-width="1.400"/><path d="M3 5.500h10M3 8h10" stroke="#1a73c7" stroke-width="1.500" stroke-dasharray="1.500 1"/><path d="M4 11h8" stroke="#1a73c7" stroke-width="1.300"/></svg>
      <svg class="i"><circle cx="6" cy="3.500" r="3" fill="#b4bfd6"/><path d="M1 14V9q0-2 3-2h4q2 0 2 2v5z" fill="#b4bfd6"/><path d="M7.500 9.500h8v5h-8zM10 9.500v3M13 9.500v3" fill="#fff" stroke="#8f9bb8"/></svg>
      <svg class="i"><path d="M5 1q3 3 6 0l5 3-2 4-2-1v8H4V7L2 8 0 4z" fill="#1a73c7"/></svg>
      <svg class="i"><path d="M15 4l-3 2-2-2 2-3c-4-1-6 2-5 5l-6 6c-1 2 1 4 3 3l6-6c3 1 6-1 5-5z" fill="#1a73c7"/></svg>
    </div>
  </div>

  <div class="row r3">
    <div class="bar">
      <i class="grip"></i>
      <button class="b"><svg class="i"><use href="#brush"/></svg>删除</button>
      <i class="sep"></i>
      <button class="b"><svg class="i"><use href="#copy"/></svg>复制</button>
      <button class="b"><svg class="i"><use href="#mirror"/></svg>镜像</button>
      <i class="sep"></i>
      <button class="b"><svg class="i"><use href="#move"/></svg>移动</button>
      <button class="b"><svg class="i"><use href="#rotate"/></svg>旋转</button>
      <i class="sep"></i>
      <button class="b"><svg class="i"><use href="#extend"/></svg>延伸</button>
      <button class="b"><svg class="i"><use href="#trim"/></svg>修剪</button>
      <i class="sep"></i>
      <button class="b"><svg class="i"><use href="#break"/></svg>打断</button>
      <button class="b"><svg class="i"><use href="#merge"/></svg>合并</button>
      <button class="b off"><svg class="i"><use href="#split"/></svg>分割</button>
      <i class="sep"></i>
      <button class="b"><svg class="i"><use href="#align"/></svg>对齐<i class="caret tight"></i></button>
      <button class="b"><svg class="i"><use href="#offset"/></svg>偏移</button>
      <button class="b"><svg class="i"><use href="#stretch"/></svg>拉伸</button>
      <i class="sep"></i>
      <button class="b off"><svg class="i"><use href="#gripi"/></svg>设置夹点</button>
    </div>
  </div>

  <div class="row r4">
    <div class="bar">
      <i class="grip"></i>
      <label class="combo w57"><select aria-label="楼层"><option>首层</option></select></label>
      <label class="combo w69"><select aria-label="构件类别"><option>自定义</option></select></label>
      <label class="combo w69"><select aria-label="构件类型"><option>自定义线</option></select></label>
      <label class="combo w69"><select aria-label="构件"><option>ZDYX-12</option></select></label>
      <i class="sep"></i>
      <button class="b"><svg class="i"><use href="#prop"/></svg>属性</button>
      <button class="b on"><svg class="i"><use href="#editr"/></svg>编辑钢筋</button>
      <button class="b"><svg class="i"><use href="#list"/></svg>构件列表</button>
      <button class="b"><svg class="i"><use href="#pick"/></svg>拾取构件</button>
    </div>
    <div class="bar stub"><i class="grip"></i><span></span></div>
    <div class="bar axis">
      <i class="grip"></i>
      <button class="b"><svg class="i"><use href="#ax2"/></svg>两点</button>
      <button class="b"><svg class="i"><use href="#axp"/></svg>平行</button>
      <button class="b"><svg class="i"><use href="#axa"/></svg>点角<i class="caret"></i></button>
      <button class="b"><svg class="i"><use href="#ax3"/></svg>三点辅轴<i class="caret"></i></button>
      <button class="b"><svg class="i"><use href="#brush"/></svg>删除辅轴</button>
      <button class="b"><svg class="i"><use href="#dim"/></svg>尺寸标注<i class="caret"></i></button>
    </div>
  </div>

  <div class="row r5">
    <div class="bar">
      <i class="grip"></i>
      <button class="b on"><svg class="i"><use href="#cursor"/></svg>选择</button>
      <button class="b drop" aria-label="选择方式"><i class="caret"></i></button>
      <i class="sep"></i>
      <button class="b"><svg class="i"><use href="#line"/></svg>直线</button>
      <button class="b"><svg class="i"><use href="#ptlen"/></svg>点加长度</button>
      <button class="b"><svg class="i"><use href="#arc"/></svg>三点画弧<i class="caret"></i></button>
      <label class="combo w57"><select aria-label="画弧方式"><option></option></select></label>
      <button class="b"><svg class="i"><use href="#recti"/></svg>矩形</button>
      <i class="sep"></i>
      <button class="b"><svg class="i"><use href="#smart"/></svg>智能布置<i class="caret tight"></i></button>
    </div>
  </div>

  <svg class="scene" role="img" aria-label="三维视图">
    <g fill="none" stroke="#008000">
      <path d="M0 22L401 0M324 0l19 58M295 29L330 0M0 182l273-15M450 158l662-37M387 186l5 16M1070 0l69 202M1082 146l59-49"/>
      <path d="M161 177h10l7 7v9l-6 8h-12l-7-7v-9zM419 177h10l7 7v9l-6 8h-12l-7-7v-9z"/>
    </g>
    <g fill="none" stroke="#800000"><path d="M0 117l116 85M880 0l277 202"/></g>
    <g fill="none" stroke="#f00"><path d="M164 0l118 86M137 202l139-64M407 177l34 25"/></g>
    <path d="M469 0h81L301 114 271 91z" fill="#0075e9"/>
    <path d="M549 0h248L355 202h-73l8-87 10 7 1-8z" fill="#005cb5"/>
    <path d="M271 91l30 23-1 8-10-7-8 87h-13l10-95-10-8z" fill="#004f9c"/>
    <path d="M55 152l3-28" stroke="#0080ff" stroke-width="4"/><path d="M59 112l4 12-9 2z" fill="#0080ff"/>
    <path d="M55 152L30 134" stroke="#0f0" stroke-width="4"/><path d="M22 128l12 0-5 8z" fill="#0f0"/>
    <path d="M56 152l26-12" stroke="#f00" stroke-width="4"/><path d="M92 135l-11-1 3 9z" fill="#f00"/>
    <g font-size="14"><text x="47" y="120" fill="#0080ff">Z</text><text x="33" y="132" fill="#0f0">Y</text><text x="70" y="135" fill="#f00">X</text></g>
    <g font-size="14" fill="#eee" text-anchor="middle"><text x="166" y="194">B</text><text x="424" y="194">3</text></g>
  </svg>

  <div class="row r6">
    <div class="bar">
      <i class="grip"></i>
      <button class="b"><svg class="i"><use href="#ortho"/></svg>正交</button>
      <div class="join">
        <button class="b on"><svg class="i"><use href="#snap"/></svg>对象捕捉</button>
        <button class="b on"><svg class="i"><use href="#dyn"/></svg>动态输入</button>
      </div>
    </div>
    <div class="bar">
      <i class="grip"></i>
      <button class="b"><svg class="i"><use href="#cross"/></svg>交点</button>
      <div class="join">
        <button class="b on"><svg class="i"><use href="#perp"/></svg>垂点</button>
        <button class="b on"><svg class="i"><use href="#mid"/></svg>中点</button>
      </div>
      <button class="b"><svg class="i"><use href="#vert"/></svg>顶点</button>
      <button class="b"><svg class="i"><use href="#coord"/></svg>坐标</button>
    </div>
  </div>

  <section class="detail">
    <div class="dgrip"><button aria-label="关闭面板"><svg class="i"><path d="M1.500 2.500h9v9h-9z" fill="#fff" stroke="#333"/><path d="M2 1.500h9" stroke="#a44"/><path d="M3 4l6 6M9 4l-6 6" stroke="#111" stroke-width="1.400"/></svg></button></div>
    <div class="dbody">
      <div class="bar dtools">
        <button class="b" aria-label="首条"><svg class="i"><use href="#first"/></svg></button>
        <button class="b" aria-label="上一条"><svg class="i"><use href="#prev"/></svg></button>
        <button class="b" aria-label="下一条"><svg class="i"><use href="#next"/></svg></button>
        <button class="b" aria-label="末条"><svg class="i"><use href="#last"/></svg></button>
        <i class="sep"></i>
        <button class="b" aria-label="上移"><svg class="i"><use href="#up"/></svg></button>
        <button class="b" aria-label="下移"><svg class="i"><use href="#down"/></svg></button>
        <i class="sep"></i>
        <button class="b off"><svg class="i"><use href="#ins"/></svg>插入</button>
        <button class="b off"><svg class="i"><use href="#del"/></svg>删除</button>
        <button class="b off"><svg class="i"><use href="#scale"/></svg>缩尺配筋</button>
        <button class="b"><svg class="i"><use href="#info"/></svg>钢筋信息</button>
        <button class="b"><svg class="i"><use href="#lib"/></svg>钢筋图库</button>
        <button class="b"><svg class="i"><use href="#other"/></svg>其他<i class="caret tight"></i></button>
        <button class="b">关闭</button>
        <i class="sep"></i>
        <span class="sum">单构件钢筋总重(kg)：23.238</span>
      </div>
      <div class="gridwrap">
      <table>
        <colgroup><col class="c34"><col class="c73"><col class="c56"><col class="c36"><col class="c33"><col class="c201"><col class="c166"><col class="c156"><col class="c61"><col class="c38"><col class="c39"><col class="c49"><col class="c61"><col class="c61"><col class="c71"><col class="c74"></colgroup>
        <thead><tr><th></th><th class="cur">筋号</th><th>直径<b>(mm)</b></th><th>级别</th><th>图号</th><th>图形</th><th>计算公式</th><th>公式描述</th><th>长度<b>(mm)</b></th><th>根数</th><th>搭接</th><th>损耗<b>(%)</b></th><th>单重<b>(kg)</b></th><th>总重<b>(kg)</b></th><th>钢筋归类</th><th>搭接形式</th></tr></thead>
        <tbody>
        <tr class="h61"><th class="cur"><b>1*</b></th><td class="name cell">横向钢筋<b>.1</b></td><td><b>8</b></td><td class="lv"><svg><use href="#rebar"/></svg></td><td><b>0</b></td>
          <td class="fig"><svg height="60"><path d="M93 16l3-2h2v43" fill="none" stroke="#000" stroke-width="2"/><g font-size="11"><text transform="translate(80 2) rotate(90)">30</text><text x="106" y="22">109</text><text transform="translate(104 20) rotate(90)">864</text></g></svg></td>
          <td><b>973+30</b></td><td>净长<b>+</b>端头</td><td><b>1003</b></td><td><b>29</b></td><td><b>0</b></td><td><b>0</b></td><td><b>0.396</b></td><td><b>11.489</b></td><td>直筋</td><td>绑扎</td></tr>
        <tr class="h30"><th><b>2</b></th><td class="name">横向钢筋<b>.2</b></td><td><b>8</b></td><td class="lv"><svg><use href="#rebar"/></svg></td><td><b>0</b></td>
          <td class="fig"><svg height="29"><path d="M70 3.500h56q6 1 6 8" fill="none" stroke="#000"/><g font-size="11"><text transform="translate(117 3) rotate(90)">34</text><text x="94" y="31">208</text></g></svg></td>
          <td><b>242</b></td><td>净长</td><td><b>242</b></td><td><b>29</b></td><td><b>0</b></td><td><b>0</b></td><td><b>0.096</b></td><td><b>2.772</b></td><td>直筋</td><td>绑扎</td></tr>
        <tr class="h29"><th><b>3</b></th><td class="name">水平纵筋<b>.1</b></td><td><b>8</b></td><td class="lv"><svg><use href="#rebar"/></svg></td><td><b>1</b></td>
          <td class="fig"><svg height="28"><path d="M23 19h150" stroke="#000" stroke-width="2"/><text x="89" y="16" font-size="11" fill="#f00">4545</text></svg></td>
          <td><b>40*d+4225</b></td><td>锚固长度<b>+</b>净长</td><td><b>4545</b></td><td><b>5</b></td><td><b>0</b></td><td><b>0</b></td><td><b>1.795</b></td><td><b>8.976</b></td><td>直筋</td><td>绑扎</td></tr>
        <tr class="h19 blank"><th><b>4</b></th><td class="name"></td><td></td><td></td><td></td><td></td><td></td><td></td><td></td><td></td><td></td><td></td><td></td><td></td><td></td><td></td></tr>
        </tbody>
      </table>
      </div>
      <div class="hscroll"><svg class="i"><path d="M10 4L6 8l4 4" fill="none" stroke="#505050" stroke-width="2"/></svg><div class="track"><div class="thumb"></div></div><svg class="i"><path d="M6 4l4 4-4 4" fill="none" stroke="#505050" stroke-width="2"/></svg></div>
    </div>
  </section>
</main>
</div>

<footer class="status">
  <span class="s147"><b>X=33776 Y=6063</b></span><span class="s77">层高<b>:4.5m</b></span><span class="s97">底标高<b>:-0.03m</b></span><span class="s47"><b>1(1)</b></span><span class="grow">按鼠标左键指定第一个角点，或拾取构件图元</span><span class="s71"><b>536.7 FPS</b></span>
</footer>
</div>

<div class="taskbar">
  <button class="start" aria-label="开始"><svg class="i"><path d="M0 2.500l7-1v6H0zM8 1.400L16 0v7.500H8zM0 8.500h7v6l-7-1zM8 8.500h8V16l-8-1.400z" fill="#fff"/></svg></button>
  <label class="search"><svg class="i24"><circle cx="12" cy="12" r="9.500" fill="none" stroke="#fff" stroke-width="2.600"/></svg><input aria-label="搜索" placeholder="在这里输入你要搜索的内容"><svg class="i"><rect x="5.500" y=".500" width="5" height="10" rx="1.500" fill="none" stroke="#bbb"/><path d="M3.500 8v4.500h9V8M8 13v3M5.500 15.500h5" fill="none" stroke="#bbb"/></svg></label>
  <button class="app" aria-label="风车"><svg class="i24"><g fill="#e4e4e4"><rect x="2" y="2" width="13" height="8" rx="4"/><rect x="14" y="1" width="8" height="13" rx="4"/><rect x="9" y="14" width="13" height="8" rx="4"/><rect x="2" y="10" width="8" height="13" rx="4"/><circle cx="12" cy="12" r="4"/></g><path d="M12 12c-5 1-8-1-10-3M12 12c-1-5 0-8 3-11M12 12c5-1 8 1 10 3M12 12c1 5 0 8-3 11" fill="none" stroke="#02090b" stroke-width="1.200"/></svg></button>
  <button class="app" aria-label="G"><svg class="i24"><path d="M20 4c-8-3-16 1-16 8 0 8 12 10 15 3 0-5-7-6-8-1 0 3 4 3 5 0M20 4c-5 1-9 2-11 6" fill="none" stroke="#ccc" stroke-width="1.600"/></svg></button>
  <i class="tsep"></i>
  <button class="app" aria-label="Edge"><svg class="i24"><path d="M2 12C3 4 8 1 13 1c6 0 9 5 9 9v3H9c1 6 8 6 12 3v4c-7 5-17 2-17-6 0-4 3-7 7-8-2 1-3 3-2 4h7c0-6-9-6-14 2z" fill="#0f7fd8"/></svg></button>
  <button class="app" aria-label="商店"><svg class="i24"><path d="M2 6l19-2v19L3 20z" fill="#fff"/><path d="M8 6c0-6 8-6 8-1" fill="none" stroke="#fff" stroke-width="1.600"/><path d="M7 9.500l4-.500v4H7zM12 9l5-.500V13h-5zM7 14h4v4l-4-.500zM12 14h5v5l-5-.700z" fill="#02090b"/></svg></button>
  <button class="app" aria-label="资源管理器"><svg class="i24"><path d="M1 3h8l1 2h12v17H1z" fill="#ffe28a"/><path d="M1 3h8v2H1z" fill="#e8b53c"/><path d="M5 13h14v9h-4v-4H9v4H5z" fill="#2f9fdd"/></svg></button>
  <button class="app active" aria-label="GGJ"><svg class="i24" viewBox="0 0 16 16"><use href="#logo"/></svg></button>
  <button class="app run stack" aria-label="浏览器"><svg class="i24"><circle cx="12" cy="12" r="10.500" fill="#4bb82e"/><path d="M7 12.500h11c0-8-11-8-11 0 0 6 8 7 11 3M20 3C13 5 5 10 4 18" fill="none" stroke="#fff" stroke-width="2.400"/></svg></button>
  <button class="app run stack" aria-label="土建"><svg class="i24"><path d="M0 0h12v12H0z" fill="#5bb531"/><path d="M12 0h12v12H12z" fill="#f2a81d"/><path d="M0 12h12v12H0z" fill="#e34b2e"/><path d="M12 12h12v12H12z" fill="#3399d8"/><path d="M6 4v3h12V4M12 4v5M5 10h14M7 20v-8h10v8M5 20.500h14M9 14h6M9 17h6" fill="none" stroke="#fff" stroke-width="1.700"/></svg></button>
  <button class="app run" aria-label="记事"><svg class="i24"><rect width="24" height="24" rx="3" fill="#f39a1d"/><path d="M4 5l12-1 2 15-12 1z" fill="#fff"/><path d="M7 9l7-1M7 12l7-1M8 15l6-1" stroke="#999"/><path d="M10 17l9-14 3 2-9 13z" fill="#5c3516"/></svg></button>
  <button class="app run" aria-label="监视器"><svg class="i24"><path d="M3 3l14 1v15l-11-2z" fill="#b9bec4"/><path d="M8 4l15-1v14l-14 1z" fill="#dce5ef" stroke="#86919e"/><path d="M10 12l3-4 3 6 2-7 3 6" fill="none" stroke="#2674bd"/><path d="M11 19h9l2 3H11z" fill="#aaa"/></svg></button>
  <div class="tray">
    <div class="cpu">29%<br>CPU使用</div>
    <svg class="i"><path d="M3 11l5-5 5 5" fill="none" stroke="#fff" stroke-width="1.300"/></svg>
    <svg class="i"><path d="M5.500 6.500h9v6h-9zM15 8v3M2.500 1v3M5.500 1v3M1.500 4.500h5v2h-5zM4 7v5.500h2" fill="none" stroke="#fff"/><path d="M7 8h6v3H7z" fill="#fff"/></svg>
    <svg class="i"><path d="M2 13C3 7 7 3 14 3M5 14c0-4 4-8 9-8M8 14c0-3 3-5 6-5" fill="none" stroke="#aaa"/><circle cx="12" cy="13" r="1.500" fill="#fff"/></svg>
    <svg class="i"><path d="M1.500 6.500h2l4-3v10l-4-3h-2z" fill="none" stroke="#fff"/><path d="M10 6q2 2 0 5M12 4q3 4 0 9M14 2.500q4 6 0 12" fill="none" stroke="#ccc"/></svg>
    <span class="zh">中</span>
    <svg class="i"><use href="#s"/></svg>
    <time>17:49<br>2017/6/6</time>
    <button class="note" aria-label="通知中心"><svg class="i24"><path d="M1 3h17v13H8l-4 4v-4H1z" fill="#fff"/><path d="M4 6.500h11M4 9.500h11M4 12.500h8" stroke="#02090b"/></svg><span>2</span></button>
  </div>
</div>
</body>
</html>
```
FILE: styles.css
```css
* { box-sizing: border-box; }
body {
  margin: 0;
  height: 100vh;
  display: flex;
  flex-direction: column;
  overflow: hidden;
  background: #f0f0f0;
  color: #000;
  font: 12px/16px "Noto Sans", "Noto Sans CJK SC", sans-serif;
}
button, input, select { font: inherit; color: inherit; margin: 0; }
button { border: 0; padding: 0; background: none; white-space: nowrap; }
ul { list-style: none; margin: 0; padding: 0; }
i, em { font-style: normal; }
.defs { position: absolute; width: 0; height: 0; }
.i { width: 16px; height: 16px; flex: none; display: block; }
.i24 { width: 24px; height: 24px; flex: none; display: block; }
.window { flex: 1; display: flex; flex-direction: column; min-height: 0; }

/* single-width Latin text beside full-width Chinese text */
.tree b, .gridwrap b, .status b { font: 10px/16px "DejaVu Sans Mono", monospace; }

/* title bar */
.titlebar { position: relative; display: flex; align-items: center; height: 23px; padding-left: 2px; gap: 5px; background: #fff; }
.titlebar h1 { flex: 1; margin: 0; font: 12px/16px Inter, "Noto Sans CJK SC", sans-serif; white-space: nowrap; }
.winbtns { display: flex; }
.winbtns button { width: 46px; height: 23px; display: grid; place-items: center; }
.ball {
  position: absolute; right: 208px; top: -30px;
  width: 48px; height: 48px; padding-top: 26px;
  border-radius: 50%; border: 2px solid #e4e4e4;
  background: #3fc35a; box-shadow: 0 1px 3px #777;
  color: #fff; font-weight: bold; text-align: center;
}

/* bars */
.row { display: flex; align-items: stretch; }
.bar { position: relative; display: flex; align-items: center; gap: 1px; border-radius: 3px; background: linear-gradient(#fdfdfd, #f1f1f1); }
.b { display: flex; align-items: center; gap: 4px; height: 23px; padding: 0 2px; border: 1px solid transparent; }
.b.on { background: #dbe9f6; border-color: #0078d7; }
.b.off { color: #8a8a8a; }
.b.field { background: #fff; width: 61px; }
.join { display: flex; }
.sep { width: 1px; height: 18px; margin: 0 1px 0 3px; background: #b9b9b9; }
.grip { width: 3px; height: 15px; margin: 0 1px 0 3px; background: repeating-linear-gradient(#b0b0b0 0 2px, transparent 2px 4px); }
.caret { width: 9px; display: grid; place-items: center; }
.caret.tight { width: 5px; }
.caret::before { content: ""; border: 3px solid transparent; border-top-color: #000; border-bottom: 0; }
.more { position: absolute; right: 7px; top: 0; font-size: 14px; font-weight: bold; line-height: 14px; }

.menubar { display: flex; height: 30px; margin-bottom: 1px; }
.menus { display: flex; align-items: center; gap: 1px; padding-left: 2px; width: 937px; }
.menus button:not(.b) { padding: 0 5px; }
.tip { width: 187px; justify-content: center; margin-right: 2px; color: #630; text-decoration: none; }
.account { flex: 1; padding-left: 1px; }
.account .b:nth-child(3) { margin-left: 2px; }

.first { height: 28px; gap: 4px; margin-bottom: 2px; }
.file { width: 149px; padding-left: 2px; }
.calc { width: 548px; padding-left: 1px; }
.view { flex: 1; }

.work { flex: 1; display: flex; min-height: 0; }

/* navigation */
.side { width: 166px; flex: none; display: flex; flex-direction: column; padding-right: 1px; }
.side-head { display: flex; height: 16px; margin-bottom: 1px; background: #0052e0; color: #fff; align-items: center; }
.side-head span { flex: 1; }
.side-head button { margin-right: 2px; }
.tab { height: 22px; border: 1px solid #a0a0a0; border-left-color: #fff; border-top-color: #fff; background: #f0f0f0; margin-right: 1px; }
.side-tools { display: flex; gap: 7px; align-items: center; height: 26px; margin-bottom: 1px; padding-left: 7px; background: linear-gradient(#fdfdfd, #eee); }
.tree { flex: 1; min-height: 0; display: flex; border: 1px solid #828790; background: #fff; margin-right: 1px; padding: 1px; }
.nodes { flex: 1; min-width: 0; overflow: hidden; white-space: nowrap; }
.nodes li li, .g { position: relative; display: flex; align-items: center; height: 16px; line-height: 16px; }
.nodes li li { padding-left: 43px; gap: 4px; }
.nodes ul {
  background:
    repeating-linear-gradient(#999 0 1px, transparent 1px 2px) 13px 0 / 1px 100% no-repeat,
    repeating-linear-gradient(#999 0 1px, transparent 1px 2px) 32px 0 / 1px 100% no-repeat;
}
.nodes li li::before { content: ""; width: 10px; margin: 0 0 0 -10px; border-top: 1px dotted #888; position: absolute; left: 43px; }
.g { padding-left: 24px; gap: 5px; }
.g::before { content: ""; position: absolute; left: 9px; top: 3px; width: 7px; height: 7px; border: solid #333; border-width: 0 2px 2px 0; transform: rotate(45deg); }
.g.shut::before { left: 8px; top: 5px; width: 6px; height: 6px; border-color: #999; border-width: 0 1px 1px 0; transform: rotate(-45deg); }
.nodes .sel { background: linear-gradient(#d9d9d9, #d9d9d9) 41px 0 / 88px 100% no-repeat; }
.tree .book { width: 13px; }
.tree li b { margin-left: -4px; }
.tree .sel { gap: 4px; }
.tree .sel .book { margin-left: -3px; }
.tree em { color: #e00; background: #ff0; font-weight: bold; }
.vscroll { width: 15px; margin-right: 1px; background: #f0f0f0; display: flex; flex-direction: column; }
.vscroll .i { width: 15px; }
.vscroll .track { flex: 1; display: flex; flex-direction: column; justify-content: flex-end; padding-bottom: 10px; }
.vscroll .thumb { height: 70%; background: #cdcdcd; }

/* drawing toolbars */
.main { flex: 1; min-width: 0; display: flex; flex-direction: column; padding-left: 4px; }
.r2 { position: relative; height: 28px; padding-left: 627px; }
.r3 { height: 27px; margin-bottom: 1px; }
.r4 { height: 26px; gap: 4px; margin-bottom: 4px; }
.r5 { height: 25px; margin-bottom: 2px; }
.r6 { height: 26px; gap: 2px; margin: 2px 0 4px; }
.row .bar:has(.grip) { padding-right: 2px; }
.combo { position: relative; display: block; height: 23px; margin-right: 2px; background: #fff; }
.combo select { width: 100%; height: 100%; border: 0; padding: 0 2px; appearance: none; background: linear-gradient(#f8f8f8, #f8f8f8) right / 12px 100% no-repeat; }
.combo::after { content: ""; position: absolute; right: 3px; top: 10px; border: 3px solid transparent; border-top-color: #000; border-bottom: 0; pointer-events: none; }
.w57 { width: 57px; }
.w69 { width: 69px; }
.off-bar { color: #888; }
.off-bar select { color: #000; }
.coord { display: flex; gap: 46px; padding-left: 17px; }
.coord input { width: 58px; height: 22px; border: 1px solid #777; background: #f8f8f8; }
.mm { padding: 0 0 0 1px; }
.chk { display: flex; align-items: center; gap: 8px; color: #000; }
.chk input { appearance: none; width: 12px; height: 12px; border: 1px solid #999; background: #fdfdfd; margin-left: 1px; }
.spin { display: flex; align-items: center; width: 68px; height: 23px; margin-left: 4px; border: 1px solid #777; background: #f8f8f8; }
.spin input { flex: 1; min-width: 0; border: 0; padding: 0 3px; background: none; text-align: right; }
.ud { width: 14px; height: 21px; flex: none; padding-left: 4px; }
.deg { padding: 0 3px 0 1px; }
.ime { position: absolute; left: 703px; top: 5px; height: 25px; width: 180px; display: flex; align-items: center; justify-content: space-between; padding: 0 4px 0 28px; background: #fff; border: 1px solid #a9c4d6; box-shadow: 0 1px 2px #bbb; z-index: 2; }
.slogo { position: absolute; left: -8px; top: -5px; width: 30px; height: 30px; }
.ime strong { color: #1a73c7; font-size: 15px; }
.stub span { width: 22px; height: 26px; background: linear-gradient(90deg, #fff, #f4f4f4); }
.stub { gap: 0; }
.stub .grip { margin: 0 2px; }
.axis { margin-left: 70px; }
.drop { width: 10px; padding: 0; justify-content: center; }

.scene { display: block; flex: none; width: 100%; height: 202px; background: #000; font-family: "Liberation Sans", sans-serif; shape-rendering: crispEdges; }

/* rebar table */
.detail { flex: 1; min-height: 0; display: flex; }
.dgrip { width: 12px; flex: none; background: radial-gradient(circle, #aaa 1px, transparent 1px) 0 10px / 6px 5px; padding: 0; }
.dgrip button { display: block; height: 14px; background: #f0f0f0; }
.dgrip .i { width: 12px; height: 14px; }
.dbody { flex: 1; min-width: 0; display: flex; flex-direction: column; margin-right: 2px; margin-bottom: 1px; }
.dtools { height: 26px; padding-left: 2px; }
.sum { padding-left: 5px; white-space: nowrap; }
.gridwrap { flex: 1; min-height: 0; overflow: hidden; background: #fff; border: 1px solid #a5a5ad; border-bottom: 0; }
table { table-layout: fixed; width: 1209px; border-collapse: separate; border-spacing: 0; }
th, td { padding: 0 2px; border: solid #bcbcbc; border-width: 0 1px 1px 0; text-align: left; font-weight: normal; white-space: nowrap; overflow: hidden; line-height: 16px; }
thead th { height: 20px; padding: 0; text-align: center; background: linear-gradient(#fff, #f0f0f0); }
thead .cur { background: linear-gradient(#fae0a6, #eebb57); color: #700050; }
tbody th { padding-left: 10px; background: #f8f8f8; }
tbody .cur { background: #ffd18c; color: #600040; }
tbody .cur b { font-weight: bold; }
td { background: #ccffda; }
.blank td { background: #fff; }
tbody .name { border-right-color: #000; }
tbody .cell { background: #adebda; }
.h61 > * { height: 61px; }
.h30 > * { height: 30px; }
.h29 > * { height: 29px; }
.h19 > * { height: 19px; }
.lv { text-align: center; }
.lv svg { width: 12px; height: 12px; display: block; margin: auto; }
.fig { padding: 0; }
.fig svg { display: block; width: 100%; font-family: "Liberation Sans", sans-serif; }
.c33 { width: 33px; } .c34 { width: 34px; } .c36 { width: 36px; } .c38 { width: 38px; } .c39 { width: 39px; }
.c49 { width: 49px; } .c56 { width: 56px; } .c61 { width: 61px; } .c71 { width: 71px; }
.c73 { width: 73px; } .c74 { width: 74px; } .c156 { width: 156px; } .c166 { width: 166px; } .c201 { width: 201px; }
.hscroll { display: flex; height: 18px; background: #f0f0f0; border: 1px solid #a5a5ad; border-top: 0; }
.hscroll .track { flex: 1; padding: 1px 0; }
.hscroll .thumb { width: 72%; height: 15px; background: #cdcdcd; }

/* status */
.status { display: flex; gap: 2px; height: 20px; margin-top: 2px; }
.status span { border: 1px solid #d7d7d7; background: linear-gradient(#fff, #f4f4f4); white-space: nowrap; }
.s147 { width: 148px; } .s77 { width: 78px; } .s97 { width: 98px; } .s47 { width: 48px; } .s71 { width: 71px; }
.grow { flex: 1; }

/* taskbar */
.taskbar { display: flex; align-items: stretch; flex: none; height: 40px; background: #020c0e; color: #fff; }
.start { width: 48px; display: grid; place-items: center; }
.search { display: flex; align-items: center; width: 344px; padding: 0 12px 0 8px; gap: 4px; background: #333; margin-right: 2px; }
.search input { flex: 1; min-width: 0; border: 0; padding: 0; background: none; font-size: 14px; }
.search input::placeholder { color: #9b9b9b; opacity: 1; }
.app { width: 49px; display: grid; place-items: center; }
.app.active { background: #333e42; border-bottom: 3px solid #76b9ed; padding-top: 3px; }
.app.run { background: linear-gradient(#76b9ed, #76b9ed) center bottom / 40px 3px no-repeat; }
.app.stack { background: linear-gradient(90deg, #76b9ed 34px, #4a7ba0 34px) center bottom / 40px 3px no-repeat; }
.tsep { width: 25px; background: linear-gradient(90deg, #555 1px, transparent 1px 2px, #555 2px 3px, transparent 3px) 9px 13px / 3px 14px no-repeat; }
.tray { margin-left: auto; display: flex; align-items: center; gap: 8px; padding-right: 3px; }
.cpu, time { text-align: center; line-height: 18px; }
.cpu { padding-right: 10px; }
.zh { font-size: 14px; }
time { padding: 0 10px 0 20px; }
.note { position: relative; width: 43px; height: 40px; padding: 8px 0 0 6px; border-right: 1px solid #555; }
.note span { position: absolute; right: 13px; top: 20px; width: 15px; height: 15px; border-radius: 50%; background: #333; border: 1px solid #888; font: bold 10px/13px "Noto Sans", sans-serif; }
```
